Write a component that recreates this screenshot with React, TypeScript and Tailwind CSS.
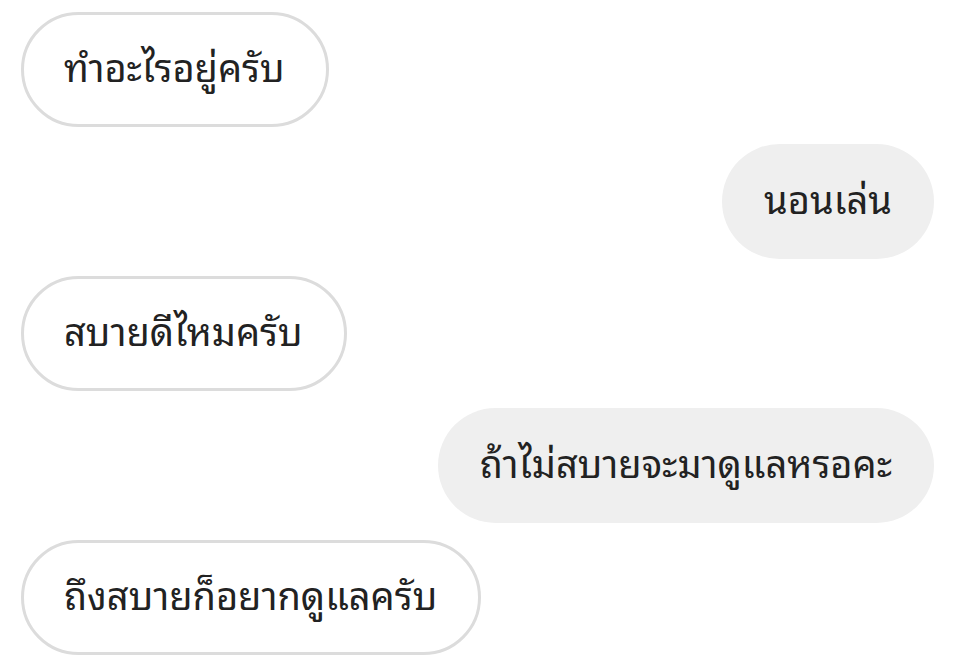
const messages = [
  { text: "ทำอะไรอยู่ครับ", me: false },
  { text: "นอนเล่น", me: true },
  { text: "สบายดีไหมครับ", me: false },
  { text: "ถ้าไม่สบายจะมาดูแลหรอคะ", me: true },
  { text: "ถึงสบายก็อยากดูแลครับ", me: false },
];

export default function App() {
  return (
    <div className="w-[960px] h-[670px] bg-white overflow-hidden flex flex-col gap-[17px] pt-[12px] pl-[21px] pr-[26px] font-['Noto_Sans_Thai_Looped','Noto_Sans',sans-serif]">
      {messages.map((m, i) =>
        m.me ? (
          <div key={i} className="flex justify-end">
            <div className="h-[115px] rounded-full bg-[#efefef] px-[42px] pb-[10px] flex items-center text-[38px] font-normal text-[#222]">
              {m.text}
            </div>
          </div>
        ) : (
          <div key={i} className="flex justify-start">
            <div className="h-[115px] rounded-full bg-white border-[3px] border-[#dcdcdc] pl-[40px] pr-[41px] pb-[10px] flex items-center text-[38px] font-normal text-[#222]">
              {m.text}
            </div>
          </div>
        )
      )}
    </div>
  );
}
